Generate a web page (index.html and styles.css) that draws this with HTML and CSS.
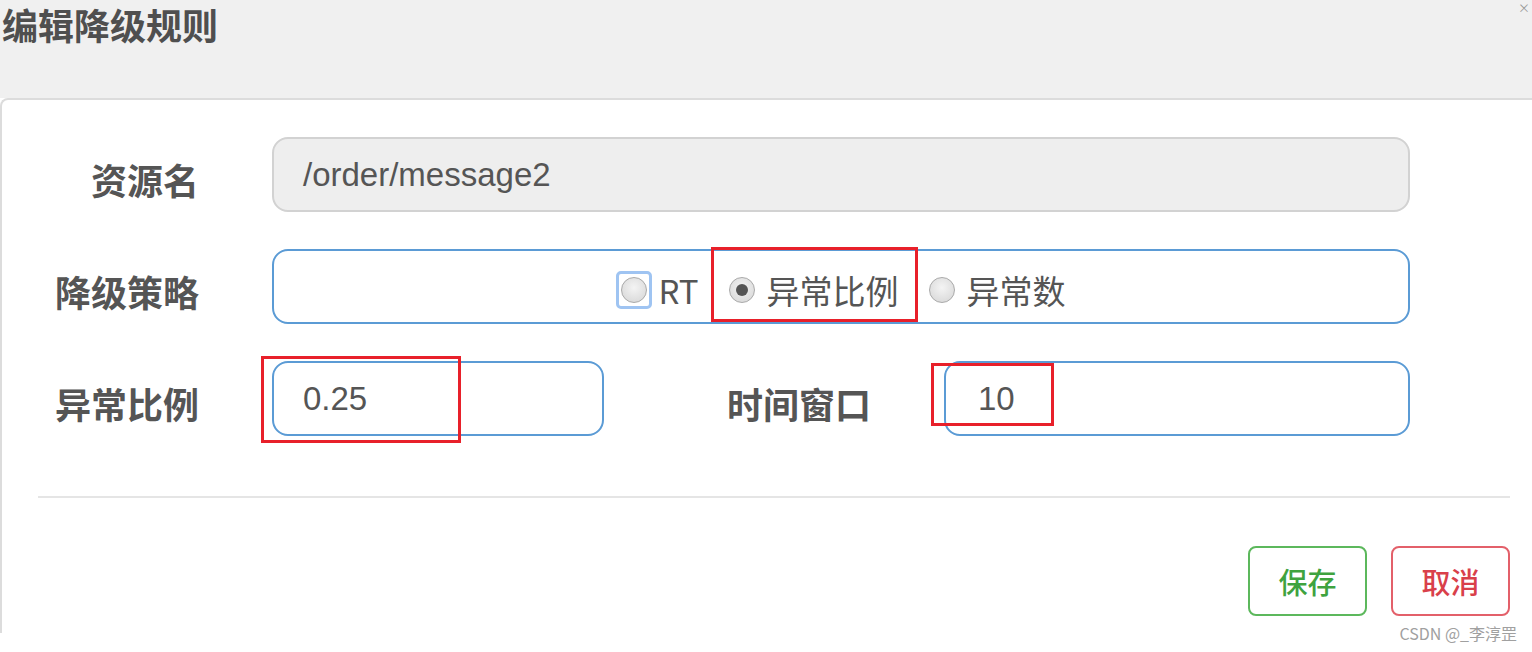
FILE: index.html
```html
<!DOCTYPE html>
<html lang="zh">

<head>
    <meta charset="utf-8">
    <meta name="viewport" content="width=device-width, initial-scale=1.0">
    <title>编辑降级规则</title>
    <link rel="stylesheet" href="styles.css">
</head>

<body>
    <div class="modal">
        <div class="kop">
            <h1>编辑降级规则</h1>
            <span class="luk">×</span>
        </div>

        <div class="indhold">
            <div class="raekke">
                <label class="navn">资源名</label>
                <div class="felt laast">/order/message2</div>
            </div>

            <div class="raekke">
                <label class="navn">降级策略</label>
                <div class="felt blaa valg">
                    <span class="fokusramme"><span class="radio"></span></span><span class="tekst rt">RT</span>
                    <span class="radio valgt"></span><span class="tekst">异常比例</span>
                    <span class="radio"></span><span class="tekst">异常数</span>
                </div>
            </div>

            <div class="raekke">
                <label class="navn">异常比例</label>
                <div class="felt blaa kort">0.25</div>
                <label class="navn anden">时间窗口</label>
                <div class="felt blaa mellem">10</div>
            </div>

            <div class="streg"></div>

            <div class="knapper">
                <button class="knap gem">保存</button>
                <button class="knap annuller">取消</button>
            </div>
        </div>
    </div>

    <!-- røde markeringer oven på skærmbilledet -->
    <div class="mark mark-a"></div>
    <div class="mark mark-b"></div>
    <div class="mark mark-c"></div>

    <div class="vandmaerke">CSDN @_李淳罡</div>
</body>

</html>
```

FILE: styles.css
```css
body {
    margin: 0;
    width: 1532px;
    height: 652px;
    overflow: hidden;
    position: relative;
    background-color: #fff;
    font-family: "Noto Sans CJK SC", "Liberation Sans", sans-serif;
}

.kop {
    height: 98px;
    background-color: #f0f0f0;
    display: flex;
    justify-content: space-between;
    align-items: flex-start;
}

h1 {
    margin: 0;
    padding: 1px 0 0 2px;
    font-size: 36px;
    line-height: 46px;
    font-weight: bold;
    color: #4f4f4f;
}

.luk {
    font-size: 12px;
    line-height: 16px;
    color: #999;
    margin-right: 2px;
}

.indhold {
    height: 535px;
    box-sizing: border-box;
    border-top: 2px solid #dcdcdc;
    border-left: 2px solid #dcdcdc;
    border-top-left-radius: 8px;
    padding-top: 37px;
}

.raekke {
    display: flex;
    align-items: center;
    height: 75px;
    margin-bottom: 37px;
}

.navn {
    width: 197px;
    margin-right: 73px;
    text-align: right;
    font-size: 36px;
    font-weight: bold;
    color: #555;
    padding-top: 8px;
}

.navn.anden {
    width: 145px;
    margin-left: 122px;
}

.felt {
    box-sizing: border-box;
    width: 1138px;
    height: 75px;
    border: 2px solid #ccc;
    border-radius: 16px;
    padding: 0 29px;
    display: flex;
    align-items: center;
    font-family: "Liberation Sans", "Noto Sans CJK SC", sans-serif;
    font-size: 33px;
    color: #555;
}

.laast {
    background-color: #eee;
    border-color: #d2d2d2;
}

.blaa {
    border-color: #5b9bd5;
}

.kort {
    width: 332px;
}

.mellem {
    width: 466px;
    padding-left: 32px;
}

.valg {
    justify-content: center;
    padding-top: 6px;
}

.tekst {
    font-family: "Noto Sans CJK SC", sans-serif;
    font-size: 33px;
    margin-left: 12px;
    margin-right: 30px;
    color: #555;
}

.tekst.rt {
    margin-left: 6px;
}

.tekst:last-child {
    margin-right: 0;
}

.fokusramme {
    display: flex;
    align-items: center;
    justify-content: center;
    box-sizing: border-box;
    width: 36px;
    height: 38px;
    border: 3px solid #9fc4f2;
    border-radius: 5px;
}

.radio {
    width: 26px;
    height: 26px;
    box-sizing: border-box;
    border-radius: 50%;
    border: 1px solid #a9a9a9;
    background: radial-gradient(circle at 50% 40%, #f4f4f4, #d4d4d4);
    position: relative;
}

.radio.valgt::after {
    content: "";
    position: absolute;
    left: 6px;
    top: 6px;
    width: 12px;
    height: 12px;
    border-radius: 50%;
    background-color: #555;
}

.streg {
    height: 2px;
    background-color: #e5e5e5;
    margin: 60px 22px 0 36px;
}

.knapper {
    display: flex;
    justify-content: flex-end;
    gap: 24px;
    margin-top: 48px;
    padding-right: 22px;
}

.knap {
    width: 119px;
    height: 70px;
    background-color: #fff;
    border: 2px solid;
    border-radius: 8px;
    font-family: "Noto Sans CJK SC", sans-serif;
    font-size: 29px;
    font-weight: 500;
    padding: 0;
}

.gem {
    border-color: #5cb85c;
    color: #3fa33f;
}

.annuller {
    border-color: #e3606a;
    color: #d9404a;
}

.mark {
    position: absolute;
    border: 3px solid #e8202a;
    box-sizing: border-box;
}

.mark-a {
    left: 711px;
    top: 247px;
    width: 207px;
    height: 75px;
}

.mark-b {
    left: 261px;
    top: 356px;
    width: 200px;
    height: 87px;
}

.mark-c {
    left: 931px;
    top: 363px;
    width: 123px;
    height: 63px;
}

.vandmaerke {
    position: absolute;
    right: 15px;
    top: 621px;
    font-size: 16px;
    color: #a0a0a0;
}
```
